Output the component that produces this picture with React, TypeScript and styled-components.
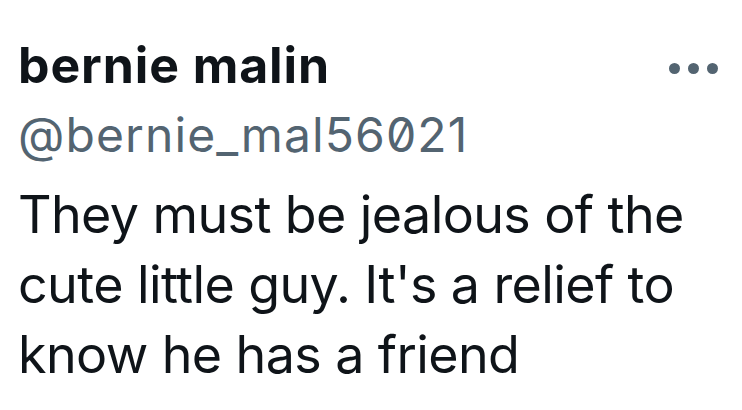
import styled, { createGlobalStyle } from "styled-components";

const GlobalStyle = createGlobalStyle`
  html, body {
    margin: 0;
    padding: 0;
    background: #ffffff;
  }
  body {
    font-family: Inter, "Noto Sans", "Liberation Sans", sans-serif;
    -webkit-font-smoothing: antialiased;
  }
`

const Tweet = styled.div`
  width: 742px;
  height: 410px;
  box-sizing: border-box;
  padding: 35px 24px 0 18px;
  overflow: hidden;
`

const Header = styled.div`
  display: flex;
  justify-content: space-between;
  align-items: flex-start;
`

const Author = styled.div`
  display: flex;
  flex-direction: column;
`

const Name = styled.div`
  font-size: 50px;
  line-height: 60px;
  font-weight: 700;
  color: #0f1419;
  letter-spacing: 0.9px;
`

const Handle = styled.div`
  margin-top: 7px;
  font-size: 48px;
  line-height: 66px;
  font-weight: 400;
  color: #536471;
  letter-spacing: 1.1px;
  font-feature-settings: "zero" 1;
`

const MoreButton = styled.div`
  display: flex;
  gap: 8px;
  margin-top: 28px;
`

const Dot = styled.span`
  width: 11px;
  height: 11px;
  border-radius: 50%;
  background: #536471;
`

const Body = styled.div`
  margin-top: 12px;
  font-size: 52px;
  line-height: 70px;
  color: #0f1419;
  letter-spacing: -0.6px;
`

export default function App() {
    return (
        <>
            <GlobalStyle/>
            <Tweet>
                <Header>
                    <Author>
                        <Name>bernie malin</Name>
                        <Handle>@bernie_mal56021</Handle>
                    </Author>
                    <MoreButton>
                        <Dot/>
                        <Dot/>
                        <Dot/>
                    </MoreButton>
                </Header>
                <Body>
                    They must be jealous of the<br/>
                    cute little guy. It's a relief to<br/>
                    know he has a friend
                </Body>
            </Tweet>
        </>
    )
}
